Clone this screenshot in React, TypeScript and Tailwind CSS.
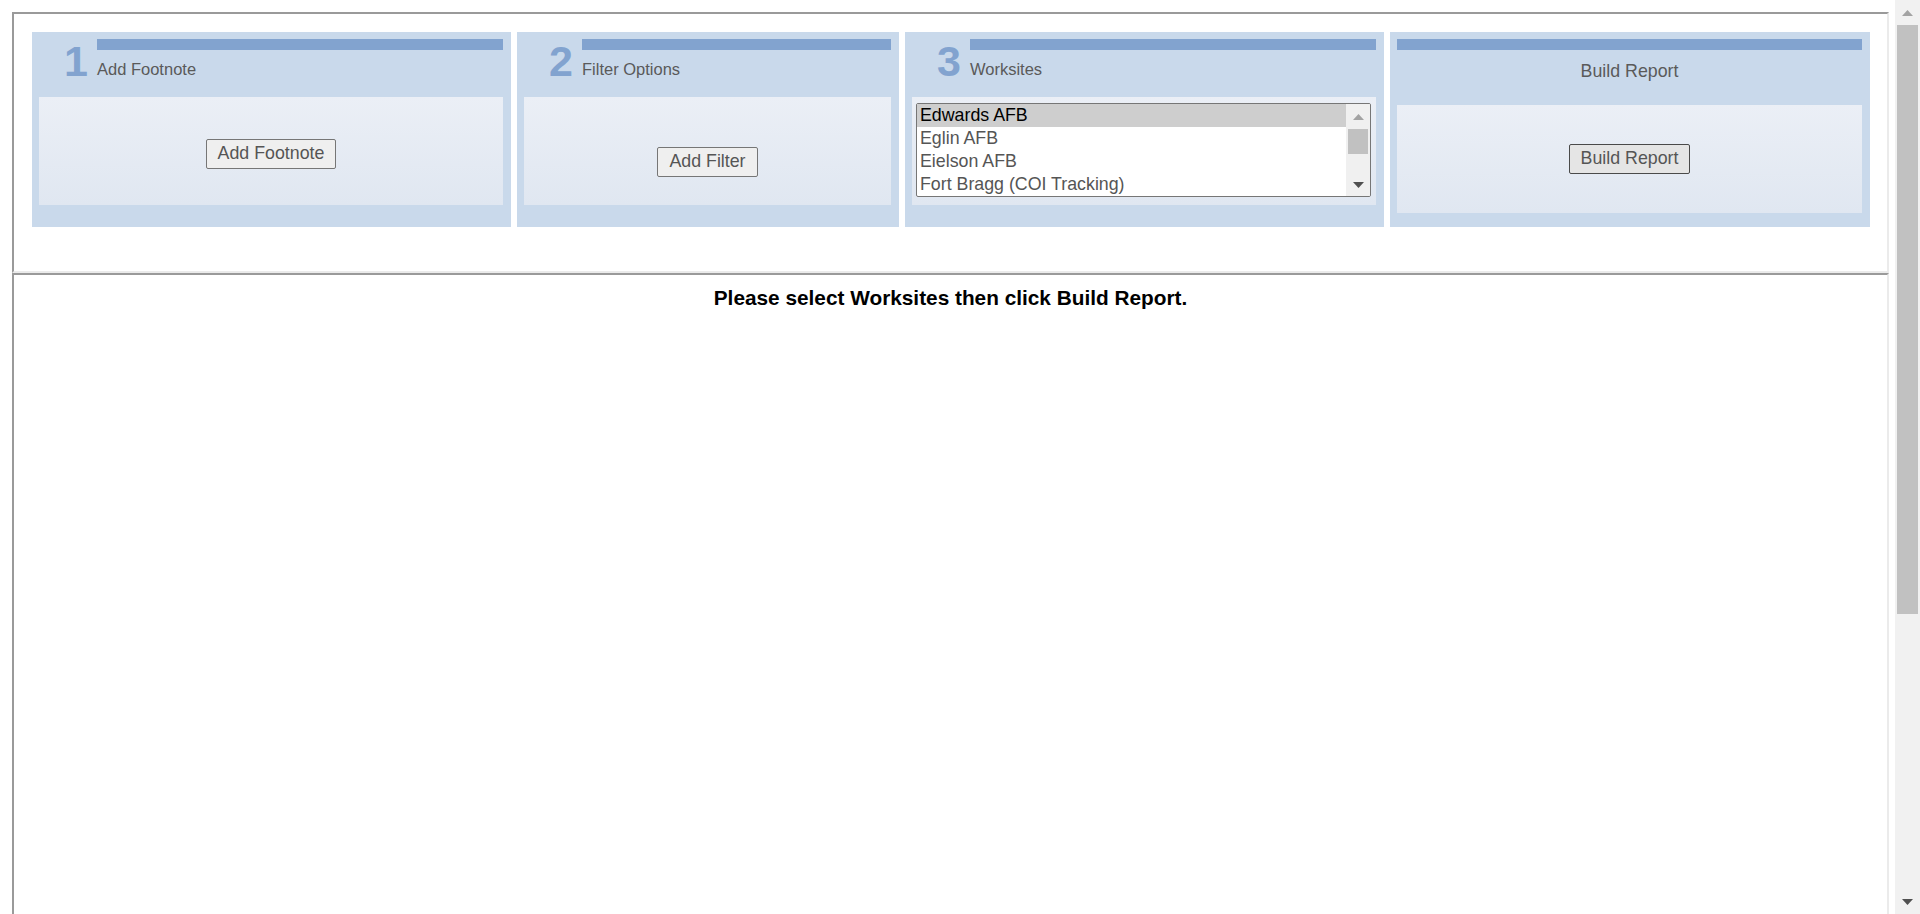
import React from "react";

type PanelProps = {
  step?: string;
  title: string;
  width: string;
  children: React.ReactNode;
};

// Numbered wizard step: blue bar + title on top, light gradient box below
const StepPanel: React.FC<PanelProps> = ({ step, title, width, children }) => {
  return (
    <div className={`${width} h-[195px] bg-[#c9d9eb] pt-[7px] pl-[7px] pr-[8px] flex flex-col`}>
      {step ? (
        <div className="flex h-[44px]">
          <div className="ml-[16px] w-[42px] pt-[1px] text-center text-[43px] leading-none font-bold text-[#82a3cf]">
            {step}
          </div>
          <div className="flex-1 flex flex-col">
            <div className="h-[11px] bg-[#82a3cf]" />
            <div className="mt-[10px] text-[16.5px] leading-[19px] text-[#5a5a5a]">{title}</div>
          </div>
        </div>
      ) : (
        <div className="flex flex-col">
          <div className="h-[11px] bg-[#82a3cf]" />
          <div className="mt-[11px] text-center text-[17.8px] leading-[21px] text-[#5a5a5a]">{title}</div>
        </div>
      )}
      <div
        className={`${step ? "mt-[14px]" : "mt-[23px]"} h-[108px] bg-linear-to-b from-[#ebeff6] to-[#e0e7f1]`}
      >
        {children}
      </div>
    </div>
  );
};

const FormButton: React.FC<{ label: string; dark?: boolean }> = ({ label, dark }) => (
  <button
    className={`h-[30px] px-[11px] border rounded-[2px] text-[17.8px] leading-none text-[#555] ${
      dark ? "bg-[#e5e5e5] border-[#4a4a4a]" : "bg-[#efefef] border-[#767676]"
    }`}
  >
    {label}
  </button>
);

const Arrow: React.FC<{ up?: boolean; color: string }> = ({ up, color }) => (
  <svg width="11" height="6" viewBox="0 0 11 6">
    <path d={up ? "M0 6 L5.5 0 L11 6 Z" : "M0 0 L5.5 6 L11 0 Z"} fill={color} />
  </svg>
);

const worksites = ["Edwards AFB", "Eglin AFB", "Eielson AFB", "Fort Bragg (COI Tracking)"];

const WorksiteList: React.FC = () => (
  <div className="h-[94px] flex border border-[#767676] rounded-[2px] bg-white overflow-hidden">
    <div className="flex-1 flex flex-col">
      {worksites.map((name, i) => (
        <div
          key={name}
          className={`h-[23px] pl-[3px] text-[17.8px] leading-[21px] pt-[1px] whitespace-nowrap ${
            i === 0 ? "bg-[#cecece] text-black" : "text-[#555]"
          }`}
        >
          {name}
        </div>
      ))}
    </div>
    <div className="w-[24px] bg-[#f0f0f0] flex flex-col">
      <div className="h-[25px] flex items-center justify-center">
        <Arrow up color="#a3a3a3" />
      </div>
      <div className="h-[25px] mx-[2px] bg-[#c1c1c1]" />
      <div className="flex-1" />
      <div className="h-[22px] flex items-center justify-center">
        <Arrow color="#505050" />
      </div>
    </div>
  </div>
);

const App: React.FC = () => {
  return (
    <div className="h-[914px] w-[1920px] flex overflow-hidden bg-white font-['Liberation_Sans',Arial,sans-serif]">
      <div className="flex-1 flex flex-col pl-[12px] pt-[12px]">
        {/* top frame: report wizard */}
        <div className="w-[1877px] h-[261px] border-2 border-t-[#9a9a9a] border-l-[#9a9a9a] border-r-[#ebebeb] border-b-[#ebebeb] pt-[18px] pl-[18px] flex gap-[6px]">
          <StepPanel step="1" title="Add Footnote" width="w-[479px]">
            <div className="flex justify-center pt-[42px]">
              <FormButton label="Add Footnote" />
            </div>
          </StepPanel>
          <StepPanel step="2" title="Filter Options" width="w-[382px]">
            <div className="flex justify-center pt-[50px]">
              <FormButton label="Add Filter" />
            </div>
          </StepPanel>
          <StepPanel step="3" title="Worksites" width="w-[479px]">
            <div className="pt-[6px] pl-[4px] pr-[5px]">
              <WorksiteList />
            </div>
          </StepPanel>
          <StepPanel title="Build Report" width="w-[480px]">
            <div className="flex justify-center pt-[39px]">
              <FormButton label="Build Report" dark />
            </div>
          </StepPanel>
        </div>

        {/* bottom frame: report output */}
        <div className="w-[1877px] flex-1 border-2 border-b-0 border-t-[#9a9a9a] border-l-[#9a9a9a] border-r-[#ebebeb] pt-[11px] text-center">
          <p className="text-[20.8px] leading-[24px] font-bold text-black">
            Please select Worksites then click Build Report.
          </p>
        </div>
      </div>

      {/* page scrollbar */}
      <div className="w-[25px] bg-[#f1f1f1] flex flex-col">
        <div className="h-[25px] flex items-center justify-center">
          <Arrow up color="#a3a3a3" />
        </div>
        <div className="h-[589px] mx-[2px] bg-[#c1c1c1]" />
        <div className="flex-1" />
        <div className="h-[25px] flex items-center justify-center">
          <Arrow color="#505050" />
        </div>
      </div>
    </div>
  );
};

export default App;
